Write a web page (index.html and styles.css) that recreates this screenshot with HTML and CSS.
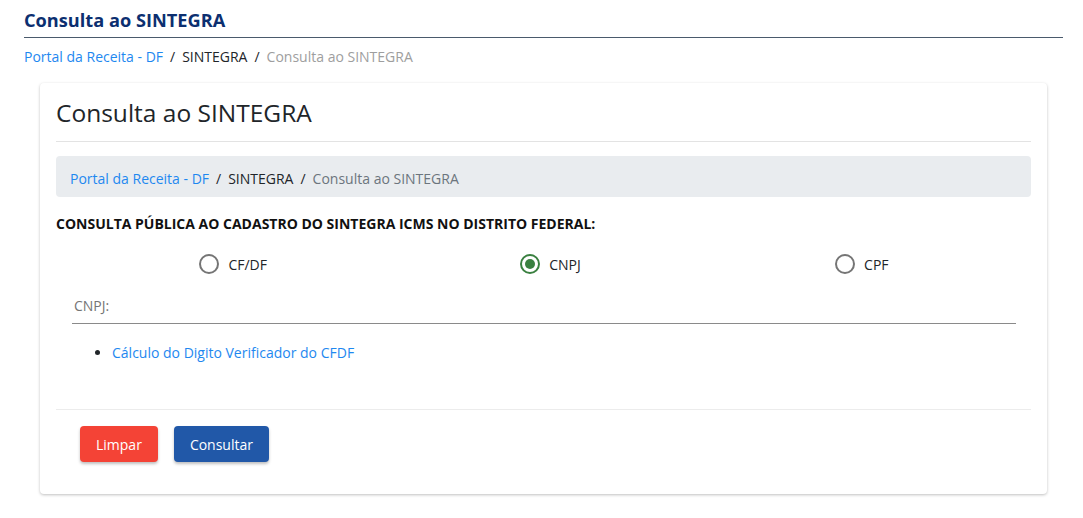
FILE: index.html
```html
<!DOCTYPE html>
<html lang="pt-BR">
<head>
    <meta charset="UTF-8">
    <title>Consulta ao SINTEGRA</title>
    <link rel="stylesheet" href="styles.css">
</head>
<body>
    <div class="page-header">
        <h1>Consulta ao SINTEGRA</h1>
    </div>
    <nav class="crumbs top-crumbs">
        <a href="#">Portal da Receita - DF</a>
        <span class="sep">/</span>
        <span class="mid">SINTEGRA</span>
        <span class="sep">/</span>
        <span class="last">Consulta ao SINTEGRA</span>
    </nav>

    <div class="card">
        <h2 class="card-title">Consulta ao SINTEGRA</h2>
        <nav class="crumbs crumb-box">
            <a href="#">Portal da Receita - DF</a>
            <span class="sep">/</span>
            <span class="mid">SINTEGRA</span>
            <span class="sep">/</span>
            <span class="last">Consulta ao SINTEGRA</span>
        </nav>

        <p class="form-heading">CONSULTA PÚBLICA AO CADASTRO DO SINTEGRA ICMS NO DISTRITO FEDERAL:</p>

        <div class="radio-row">
            <label class="radio"><span class="dot"></span>CF/DF</label>
            <label class="radio checked"><span class="dot"></span>CNPJ</label>
            <label class="radio"><span class="dot"></span>CPF</label>
        </div>

        <div class="field">
            <label for="doc">CNPJ:</label>
            <input type="text" id="doc">
        </div>

        <ul class="links">
            <li><a href="#">Cálculo do Digito Verificador do CFDF</a></li>
        </ul>

        <div class="actions">
            <button class="btn btn-red">Limpar</button>
            <button class="btn btn-blue">Consultar</button>
        </div>
    </div>
</body>
</html>
```

FILE: styles.css
```css
body {
    font-family: "Open Sans", Arial, sans-serif;
    margin: 0;
    padding: 0 20px 0 24px;
    background: #fff;
    color: #212529;
}
.page-header {
    border-bottom: 1px solid #4a5a6c;
    height: 37px;
}
.page-header h1 {
    margin: 0;
    padding-top: 7px;
    font-size: 18.2px;
    font-weight: 700;
    color: #0c2f70;
    line-height: 26px;
}
.crumbs {
    font-size: 14px;
    display: flex;
    align-items: center;
}
.crumbs a {
    color: #1e88f0;
    text-decoration: none;
}
.crumbs .sep {
    margin: 0 7px;
    color: #212529;
}
.crumbs .mid {
    color: #212529;
}
.top-crumbs {
    height: 38px;
    line-height: 38px;
}
.top-crumbs .last {
    color: #9e9e9e;
}
.card {
    margin: 7px 16px 24px 16px;
    padding: 9px 16px 32px 16px;
    background: #fff;
    border-radius: 4px;
    box-shadow: 0 1px 3px rgba(0, 0, 0, 0.25);
}
.card-title {
    margin: 0;
    font-size: 24.5px;
    font-weight: 400;
    line-height: 42px;
    padding-bottom: 7px;
    border-bottom: 1px solid #e3e3e3;
}
.crumb-box {
    margin-top: 14px;
    background: #e9ecef;
    border-radius: 4px;
    height: 38px;
    padding: 3px 14px 0 14px;
}
.crumb-box .last {
    color: #6c757d;
}
.form-heading {
    margin: 17px 0 0 0;
    font-size: 14px;
    font-weight: 700;
    line-height: 19px;
    color: #111;
}
.radio-row {
    display: grid;
    grid-template-columns: 1fr 1fr 1fr;
    margin: 16px 16px 0 16px;
    height: 30px;
    align-items: center;
}
.radio {
    justify-self: center;
    display: flex;
    align-items: center;
    font-size: 14px;
    color: #212529;
    margin-left: 8px;
}
.radio.checked {
    margin-left: 14px;
}
.radio .dot {
    width: 16px;
    height: 16px;
    border: 2px solid #757575;
    border-radius: 50%;
    margin-right: 9px;
    position: relative;
}
.radio.checked .dot {
    border-color: #3a8040;
}
.radio.checked .dot::after {
    content: '';
    position: absolute;
    top: 3px;
    left: 3px;
    width: 10px;
    height: 10px;
    border-radius: 50%;
    background: #3a8040;
}
.field {
    margin: 8px 15px 0 16px;
    border-bottom: 1px solid #8a8a8a;
    height: 36px;
    display: flex;
    align-items: center;
}
.field label {
    font-size: 14px;
    color: #757575;
    padding-left: 2px;
}
.field input {
    flex: 1;
    border: none;
    outline: none;
    background: transparent;
    font: inherit;
}
.links {
    margin: 16px 0 0 0;
    padding-left: 56px;
    font-size: 14px;
    line-height: 26px;
    padding-bottom: 43px;
    border-bottom: 1px solid #ececec;
}
.links a {
    color: #1e88f0;
    text-decoration: none;
}
.actions {
    display: flex;
    gap: 16px;
    padding: 16px 24px 0 24px;
}
.btn {
    height: 36px;
    border: none;
    border-radius: 4px;
    color: #fff;
    font-family: "Open Sans", Arial, sans-serif;
    font-size: 14px;
    font-weight: 500;
    padding: 0 16px;
    box-shadow: 0 2px 3px rgba(0, 0, 0, 0.25);
    cursor: pointer;
}
.btn-red {
    background: #f44336;
}
.btn-blue {
    background: #2158a8;
}
```
